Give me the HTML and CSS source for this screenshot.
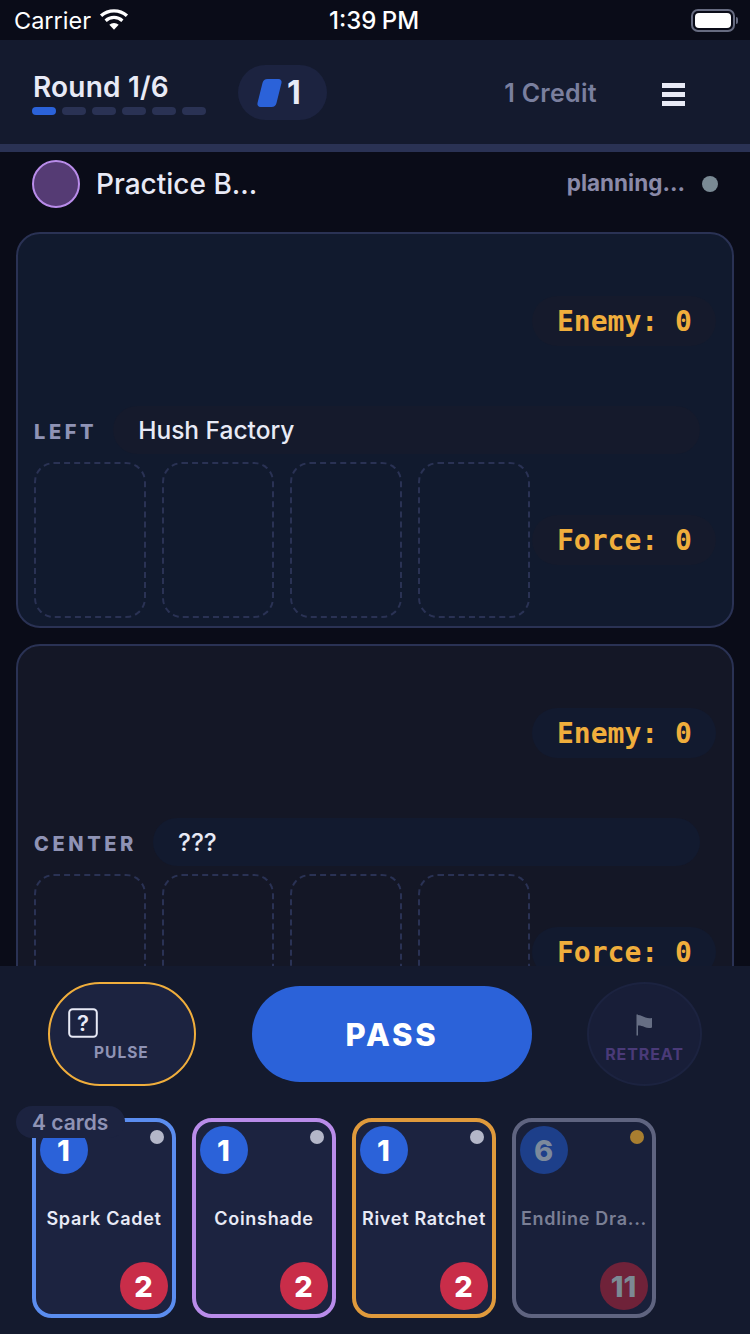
FILE: index.html
```html
<!DOCTYPE html>
<html lang="en">
<head>
    <meta charset="UTF-8">
    <meta name="viewport" content="width=device-width, initial-scale=1.0">
    <title>Match</title>
    <link rel="stylesheet" href="styles.css">
</head>
<body>
    <div class="status-bar">
        <div class="status-left">
            <span class="carrier">Carrier</span>
            <svg class="wifi" width="30" height="22" viewBox="0 0 32 22">
                <path d="M16 21.5 11 16a7.5 7.5 0 0 1 10 0z" fill="#fff"/>
                <path d="M8.2 13a11.6 11.6 0 0 1 15.6 0l2.3-2.6a15.2 15.2 0 0 0-20.2 0z" fill="#fff"/>
                <path d="M3.4 7.8a18.8 18.8 0 0 1 25.2 0L31 5.2a22.4 22.4 0 0 0-30 0z" fill="#fff"/>
            </svg>
        </div>
        <div class="status-time">1:39 PM</div>
        <div class="status-right">
            <div class="battery"><div class="battery-fill"></div></div>
            <div class="battery-cap"></div>
        </div>
    </div>

    <header class="top-bar">
        <div class="round">
            <div class="round-title">Round 1/6</div>
            <div class="round-dots">
                <span class="round-dot active"></span>
                <span class="round-dot"></span>
                <span class="round-dot"></span>
                <span class="round-dot"></span>
                <span class="round-dot"></span>
                <span class="round-dot"></span>
            </div>
        </div>
        <div class="energy">
            <span class="energy-icon"></span>
            <span class="energy-value">1</span>
        </div>
        <div class="credits">1 Credit</div>
        <div class="menu-btn">
            <span></span>
            <span></span>
            <span></span>
        </div>
    </header>

    <div class="opponent">
        <div class="avatar"></div>
        <div class="opponent-name">Practice B...</div>
        <div class="opponent-status">planning...</div>
        <div class="status-dot"></div>
    </div>

    <main class="board">
        <section class="lane lane-left">
            <div class="score-row">
                <div class="score-pill">Enemy: 0</div>
            </div>
            <div class="lane-head">
                <div class="lane-label">LEFT</div>
                <div class="lane-name">Hush Factory</div>
            </div>
            <div class="lane-body">
                <div class="slots">
                    <div class="slot"></div>
                    <div class="slot"></div>
                    <div class="slot"></div>
                    <div class="slot"></div>
                </div>
                <div class="score-pill">Force: 0</div>
            </div>
        </section>

        <section class="lane lane-center">
            <div class="score-row">
                <div class="score-pill">Enemy: 0</div>
            </div>
            <div class="lane-head">
                <div class="lane-label">CENTER</div>
                <div class="lane-name">???</div>
            </div>
            <div class="lane-body">
                <div class="slots">
                    <div class="slot"></div>
                    <div class="slot"></div>
                    <div class="slot"></div>
                    <div class="slot"></div>
                </div>
                <div class="score-pill">Force: 0</div>
            </div>
        </section>
    </main>

    <footer class="hand-panel">
        <div class="actions">
            <button class="pulse-btn">
                <svg class="pulse-icon" width="30" height="30" viewBox="0 0 30 30">
                    <rect x="1.2" y="1.2" width="27.6" height="27.6" rx="3.5" fill="none" stroke="#e8eaf6" stroke-width="2"/>
                    <text x="15" y="22.5" text-anchor="middle" class="pulse-mark">?</text>
                </svg>
                <span class="pulse-label">PULSE</span>
            </button>
            <button class="pass-btn">PASS</button>
            <button class="retreat-btn">
                <svg width="18" height="22" viewBox="0 0 18 22">
                    <path d="M1.2 0.5 V21.5" stroke="#7c8598" stroke-width="1.2"/>
                    <path d="M1.8 1C5 1.2 7 2.6 9.5 3.6 12 4.4 14 4.4 16 4V13.4C13.5 14.4 11 14 8.5 13 6 12 4 11.4 1.8 11.6z" fill="#666e84"/>
                </svg>
                <span class="retreat-label">RETREAT</span>
            </button>
        </div>

        <div class="hand">
            <div class="hand-count">4 cards</div>

            <div class="card card-blue">
                <div class="card-top">
                    <div class="cost">1</div>
                    <div class="rarity"></div>
                </div>
                <div class="card-name">Spark Cadet</div>
                <div class="card-bottom"><div class="power">2</div></div>
            </div>

            <div class="card card-purple">
                <div class="card-top">
                    <div class="cost">1</div>
                    <div class="rarity"></div>
                </div>
                <div class="card-name">Coinshade</div>
                <div class="card-bottom"><div class="power">2</div></div>
            </div>

            <div class="card card-orange">
                <div class="card-top">
                    <div class="cost">1</div>
                    <div class="rarity"></div>
                </div>
                <div class="card-name">Rivet Ratchet</div>
                <div class="card-bottom"><div class="power">2</div></div>
            </div>

            <div class="card card-disabled">
                <div class="card-top">
                    <div class="cost">6</div>
                    <div class="rarity rarity-gold"></div>
                </div>
                <div class="card-name">Endline Dra...</div>
                <div class="card-bottom"><div class="power">11</div></div>
            </div>
        </div>
    </footer>
</body>
</html>
```

FILE: styles.css
```css
/* Reset and Base Styles */
* {
    margin: 0;
    padding: 0;
    box-sizing: border-box;
}

body {
    font-family: Inter, "Noto Sans", sans-serif;
    background-color: #0a0c18;
    color: #e8eaf6;
    width: 750px;
    height: 1334px;
    display: flex;
    flex-direction: column;
    overflow: hidden;
}

/* Status Bar */
.status-bar {
    height: 40px;
    flex-shrink: 0;
    position: relative;
    display: flex;
    justify-content: space-between;
    align-items: center;
    padding: 0 12px 0 14px;
    color: #fff;
}

.status-left {
    display: flex;
    align-items: center;
    gap: 8px;
}

.carrier {
    font-size: 23.5px;
}

.status-time {
    position: absolute;
    left: 329px;
    top: 6px;
    font-size: 24px;
    font-weight: 500;
    word-spacing: -1px;
}

.status-right {
    display: flex;
    align-items: center;
    gap: 1px;
}

.battery {
    width: 44px;
    height: 23px;
    border: 2px solid #666b80;
    border-radius: 7px;
    padding: 2px;
}

.battery-fill {
    height: 100%;
    background-color: #fff;
    border-radius: 4px;
}

.battery-cap {
    width: 2px;
    height: 7px;
    background-color: #666b80;
    border-radius: 0 2px 2px 0;
}

/* Top Bar */
.top-bar {
    height: 112px;
    flex-shrink: 0;
    display: flex;
    align-items: center;
    background-color: #141a2e;
    border-bottom: 8px solid #2a3254;
    padding: 0 65px 0 32px;
}

.round {
    width: 206px;
    margin-top: 1px;
}

.round-title {
    font-size: 28px;
    font-weight: 600;
    letter-spacing: 0.2px;
    line-height: 32px;
    padding-left: 1px;
    white-space: nowrap;
}

.round-dots {
    display: flex;
    gap: 6px;
    margin-top: 4px;
}

.round-dot {
    width: 24px;
    height: 8px;
    border-radius: 4px;
    background-color: #2a3254;
}

.round-dot.active {
    background-color: #2b62d9;
}

.energy {
    width: 89px;
    height: 55px;
    border-radius: 28px;
    margin-top: 1px;
    background-color: #1c2340;
    display: flex;
    align-items: center;
    padding-left: 22px;
    gap: 8px;
}

.energy-icon {
    width: 19px;
    height: 28px;
    background-color: #2b62d9;
    border-radius: 4px;
    transform: skewX(-14deg);
}

.energy-value {
    font-size: 32px;
    font-weight: 700;
}

.credits {
    margin-left: auto;
    margin-top: 2px;
    font-size: 25px;
    font-weight: 600;
    letter-spacing: 0.3px;
    color: #7a7f9e;
}

.menu-btn {
    width: 23px;
    margin-left: 65px;
    margin-top: 4px;
    display: flex;
    flex-direction: column;
    gap: 4px;
}

.menu-btn span {
    height: 5px;
    background-color: #e8eaf6;
}

/* Opponent Row */
.opponent {
    height: 64px;
    flex-shrink: 0;
    display: flex;
    align-items: center;
    padding: 0 32px;
}

.avatar {
    width: 48px;
    height: 48px;
    border-radius: 50%;
    background-color: #553b74;
    border: 2px solid #b98cea;
}

.opponent-name {
    margin-left: 16px;
    font-size: 28px;
    font-weight: 500;
}

.opponent-status {
    margin-left: auto;
    margin-bottom: 3px;
    font-size: 22.5px;
    font-weight: 700;
    color: #8a8aa8;
}

.status-dot {
    width: 16px;
    height: 16px;
    border-radius: 50%;
    background-color: #7a8a94;
    margin-left: 17px;
}

/* Lanes */
.board {
    flex: 1;
    min-height: 0;
    overflow: hidden;
    padding: 16px 16px 0;
    display: flex;
    flex-direction: column;
    gap: 16px;
}

.lane {
    flex-shrink: 0;
    height: 396px;
    border: 2px solid #2a3254;
    border-radius: 24px;
    padding: 62px 16px 0;
}

.lane-left {
    background-color: #111a2e;
}

.lane-center {
    background-color: #141726;
}

.score-row {
    display: flex;
    justify-content: flex-end;
}

.score-pill {
    width: 184px;
    height: 50px;
    border-radius: 25px;
    margin-left: auto;
    display: flex;
    align-items: center;
    padding-left: 25px;
    font-family: "DejaVu Sans Mono", monospace;
    font-size: 28px;
    font-weight: 700;
    color: #f0ae3c;
}

.lane-left .score-pill {
    background-color: #151a2c;
}

.lane-center .score-pill {
    background-color: #121a2f;
}

.lane-head {
    display: flex;
    align-items: center;
    height: 48px;
    margin-top: 60px;
    padding-right: 16px;
}

.lane-label {
    padding-top: 3px;
    font-size: 20px;
    font-weight: 800;
    letter-spacing: 3.6px;
    color: #8f93b5;
    margin-right: 16px;
}

.lane-name {
    flex: 1;
    height: 48px;
    border-radius: 24px;
    padding-left: 25px;
    display: flex;
    align-items: center;
    font-size: 24.5px;
    font-weight: 500;
}

.lane-left .lane-name {
    background-color: #151a2c;
}

.lane-center .lane-name {
    background-color: #121a2f;
}

.lane-body {
    display: flex;
    align-items: center;
    margin-top: 8px;
}

.slots {
    display: flex;
    gap: 16px;
}

.slot {
    width: 112px;
    height: 156px;
    border: 2px dashed #2a3254;
    border-radius: 20px;
}

/* Hand Panel */
.hand-panel {
    position: fixed;
    left: 0;
    bottom: 0;
    width: 750px;
    height: 368px;
    background-color: #141a2e;
    padding: 16px 0 0;
}

.actions {
    height: 104px;
    display: flex;
    align-items: center;
    padding-left: 48px;
}

.actions button {
    font-family: inherit;
    cursor: pointer;
}

.pulse-btn {
    width: 148px;
    height: 104px;
    border-radius: 52px;
    border: 2px solid #f0ae3c;
    background-color: #1c2340;
    display: flex;
    flex-direction: column;
    padding: 24px 0 0 18px;
    text-align: left;
}

.pulse-icon {
    display: block;
}

.pulse-mark {
    font-family: Inter, sans-serif;
    font-size: 22px;
    font-weight: 600;
    fill: #e8eaf6;
}

.pulse-label {
    margin: 6px 0 0 26px;
    font-size: 15.5px;
    font-weight: 700;
    letter-spacing: 1px;
    line-height: 18px;
    color: #8f93b5;
}

.pass-btn {
    width: 280px;
    height: 96px;
    margin-left: 56px;
    border: none;
    border-radius: 48px;
    background-color: #2b62d9;
    color: #fff;
    font-size: 31px;
    font-weight: 800;
    letter-spacing: 2.8px;
}

.retreat-btn {
    width: 115px;
    height: 104px;
    margin-left: 55px;
    border-radius: 50%;
    border: 2px solid #1c2340;
    background-color: #181e38;
    display: flex;
    flex-direction: column;
    align-items: center;
    padding-top: 30px;
}

.retreat-label {
    margin-top: 9px;
    font-size: 16px;
    font-weight: 700;
    letter-spacing: 0.9px;
    line-height: 18px;
    color: #4a3a78;
}

/* Cards */
.hand {
    position: relative;
    display: flex;
    gap: 16px;
    padding: 32px 32px 0;
}

.hand-count {
    position: absolute;
    left: 16px;
    top: 20px;
    z-index: 2;
    height: 32px;
    padding: 0 17px 0 16px;
    border-radius: 16px;
    background-color: #1c2340;
    color: #8f93b5;
    font-size: 21px;
    font-weight: 600;
    line-height: 34px;
}

.card {
    width: 144px;
    height: 200px;
    border: 4px solid;
    border-radius: 20px;
    background-color: #1c2340;
    padding: 4px;
    display: flex;
    flex-direction: column;
}

.card-blue {
    border-color: #5b8def;
}

.card-purple {
    border-color: #b98cea;
}

.card-orange {
    border-color: #e09a3c;
}

.card-disabled {
    border-color: #5f6480;
    background-color: #19203a;
}

.card-top {
    display: flex;
    justify-content: space-between;
}

.cost,
.power {
    width: 48px;
    height: 48px;
    padding-right: 1px;
    border-radius: 50%;
    display: flex;
    align-items: center;
    justify-content: center;
    font-size: 29px;
    font-weight: 800;
    color: #fff;
}

.cost {
    background-color: #2b62d9;
}

.power {
    background-color: #c92d49;
}

.rarity {
    width: 14px;
    height: 14px;
    margin: 4px 4px 0 0;
    border-radius: 50%;
    background-color: #b4b7c9;
}

.rarity-gold {
    background-color: #a87e30;
}

.card-name {
    margin-top: 33px;
    height: 24px;
    text-align: center;
    font-size: 18px;
    font-weight: 600;
    letter-spacing: 0.7px;
    line-height: 24px;
    white-space: nowrap;
}

.card-bottom {
    margin-top: auto;
    display: flex;
    justify-content: flex-end;
}

.card-disabled .card-name {
    color: #7a7f95;
}

.card-disabled .cost {
    background-color: #1d3f8a;
    color: #7c8a9c;
}

.card-disabled .power {
    background-color: #6f2239;
    color: #7c8a94;
}
```
